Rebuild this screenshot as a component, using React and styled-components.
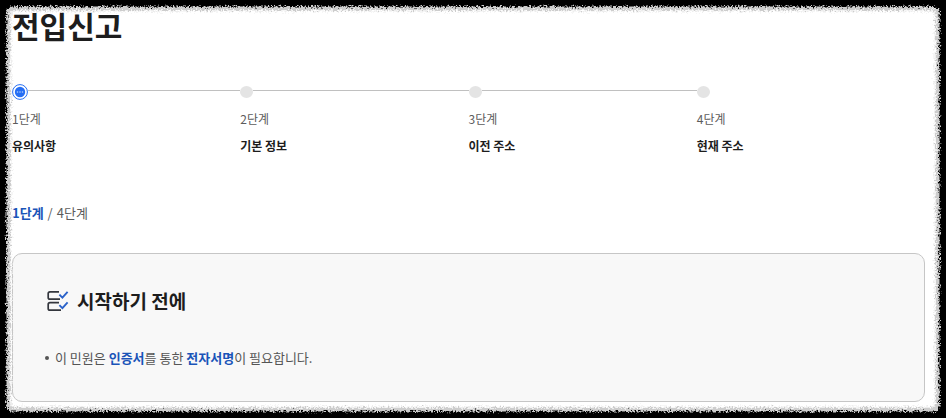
import React from 'react'
import styled, { createGlobalStyle } from 'styled-components'

const steps = [
  { id: 1, label: '1단계', name: '유의사항' },
  { id: 2, label: '2단계', name: '기본 정보' },
  { id: 3, label: '3단계', name: '이전 주소' },
  { id: 4, label: '4단계', name: '현재 주소' },
]

function CurrentMarker() {
  return (
    <svg width="16" height="16" viewBox="0 0 16 16" aria-hidden="true">
      <circle cx="8" cy="8" r="7.4" fill="#fff" stroke="#256ef4" strokeWidth="1" />
      <circle cx="8" cy="8" r="5.2" fill="#256ef4" />
      <circle cx="5.5" cy="8" r="0.8" fill="#b1cefb" />
      <circle cx="8" cy="8" r="0.8" fill="#b1cefb" />
      <circle cx="10.5" cy="8" r="0.8" fill="#b1cefb" />
    </svg>
  )
}

function ChecklistIcon() {
  return (
    <svg width="22" height="22" viewBox="0 0 22 22" fill="none" strokeWidth="1.7" aria-hidden="true">
      <path d="M12 1.8H3Q1.2 1.8 1.2 3.6V7.4Q1.2 9.2 3 9.2H13" stroke="#33363d" />
      <path d="M12 12.7H3Q1.2 12.7 1.2 14.5V18.4Q1.2 20.2 3 20.2H14" stroke="#33363d" />
      <path d="M12.4 4.6L15.4 7.6L20.6 1.8" stroke="#2b62c9" strokeWidth="1.9" />
      <path d="M12.4 15.2L15.4 18.2L20.6 12.4" stroke="#2b62c9" strokeWidth="1.9" />
    </svg>
  )
}

function RoughEdge() {
  return (
    <EdgeSvg aria-hidden="true">
      <filter id="fray" filterUnits="userSpaceOnUse" x="0" y="0" width="100%" height="100%">
        <feTurbulence type="fractalNoise" baseFrequency="0.6" numOctaves="2" seed="4" result="noise" />
        <feDisplacementMap in="SourceGraphic" in2="noise" scale="8" xChannelSelector="R" yChannelSelector="G" result="torn" />
        <feGaussianBlur in="torn" stdDeviation="0.4" />
      </filter>
      <g fill="none">
        <g filter="url(#fray)">
          <rect x="-4" y="-4" rx="20" stroke="#ededed" strokeWidth="31" />
          <rect x="-4" y="-4" rx="18" stroke="#cdcdcd" strokeWidth="28" />
          <rect x="-4" y="-4" rx="16" stroke="#000" strokeWidth="21" />
        </g>
        <rect x="-4" y="-4" rx="10" stroke="#000" strokeWidth="17" />
      </g>
    </EdgeSvg>
  )
}

function App() {
  return (
    <>
      <GlobalStyle />
      <Page>
        <Title>전입신고</Title>

        <Steps>
          {steps.map((step) => (
            <Step key={step.id} aria-current={step.id === 1 ? 'step' : undefined}>
              <Track>
                {step.id === 1 ? <CurrentMarker /> : <Dot />}
                {step.id < steps.length && <Line />}
              </Track>
              <StepLabel>{step.label}</StepLabel>
              <StepName>{step.name}</StepName>
            </Step>
          ))}
        </Steps>

        <Progress>
          <Strong>1단계</Strong>
          <span>/</span>
          <span>4단계</span>
        </Progress>

        <Notice>
          <NoticeTitle>
            <ChecklistIcon />
            시작하기 전에
          </NoticeTitle>
          <NoticeList>
            <NoticeItem>
              <span>이 민원은 <Strong>인증서</Strong>를 통한 <Strong>전자서명</Strong>이 필요합니다.</span>
            </NoticeItem>
          </NoticeList>
        </Notice>
      </Page>
      <RoughEdge />
    </>
  )
}

const GlobalStyle = createGlobalStyle`
  * {
    box-sizing: border-box;
  }
  body {
    margin: 0;
    background: #fff;
    color: #1d1d1d;
    font-family: "Noto Sans CJK KR", sans-serif;
  }
  h1, h2, p, ol, ul {
    margin: 0;
    padding: 0;
    list-style: none;
  }
`

const Page = styled.main`
  padding: 4px 21px 16px 12px;
`

const Title = styled.h1`
  font-size: 30px;
  line-height: 42px;
  font-weight: 700;
`

const Steps = styled.ol`
  display: grid;
  grid-template-columns: repeat(4, 1fr);
  margin-top: 38px;
`

const Step = styled.li`
  min-width: 0;
`

const Track = styled.div`
  display: flex;
  align-items: center;
  height: 16px;
`

const Dot = styled.span`
  width: 13px;
  height: 12px;
  border-radius: 50%;
  background: #e4e4e4;
`

const Line = styled.span`
  flex: 1;
  height: 1px;
  margin-bottom: 3px;
  background: #c0c0c0;
`

const StepLabel = styled.p`
  margin-top: 9px;
  font-size: 12px;
  line-height: 20px;
  color: #5c5c5c;
`

const StepName = styled.p`
  margin-top: 8px;
  font-size: 12px;
  line-height: 18px;
  font-weight: 700;
`

const Progress = styled.p`
  display: flex;
  gap: 4px;
  margin-top: 47px;
  font-size: 13px;
  line-height: 22px;
  color: #5c5c5c;
`

const Strong = styled.strong`
  font-weight: 700;
  color: #1a54b8;
`

const Notice = styled.section`
  margin-top: 29px;
  padding: 32px;
  border: 1px solid #c6c6c6;
  border-radius: 10px;
  background: #f8f8f8;
`

const NoticeTitle = styled.h2`
  display: flex;
  align-items: center;
  gap: 8px;
  padding-left: 2px;
  font-size: 19px;
  line-height: 30px;
  font-weight: 700;
`

const NoticeList = styled.ul`
  margin-top: 31px;
`

const NoticeItem = styled.li`
  display: flex;
  align-items: center;
  gap: 6px;
  font-size: 13px;
  line-height: 22px;
  color: #555;

  &::before {
    content: "";
    width: 4px;
    height: 4px;
    border-radius: 50%;
    background: #555;
  }
`

const EdgeSvg = styled.svg`
  position: fixed;
  inset: 0;
  width: 100%;
  height: 100%;
  pointer-events: none;

  rect {
    width: calc(100% + 8px);
    height: calc(100% + 8px);
  }
`

export default App
